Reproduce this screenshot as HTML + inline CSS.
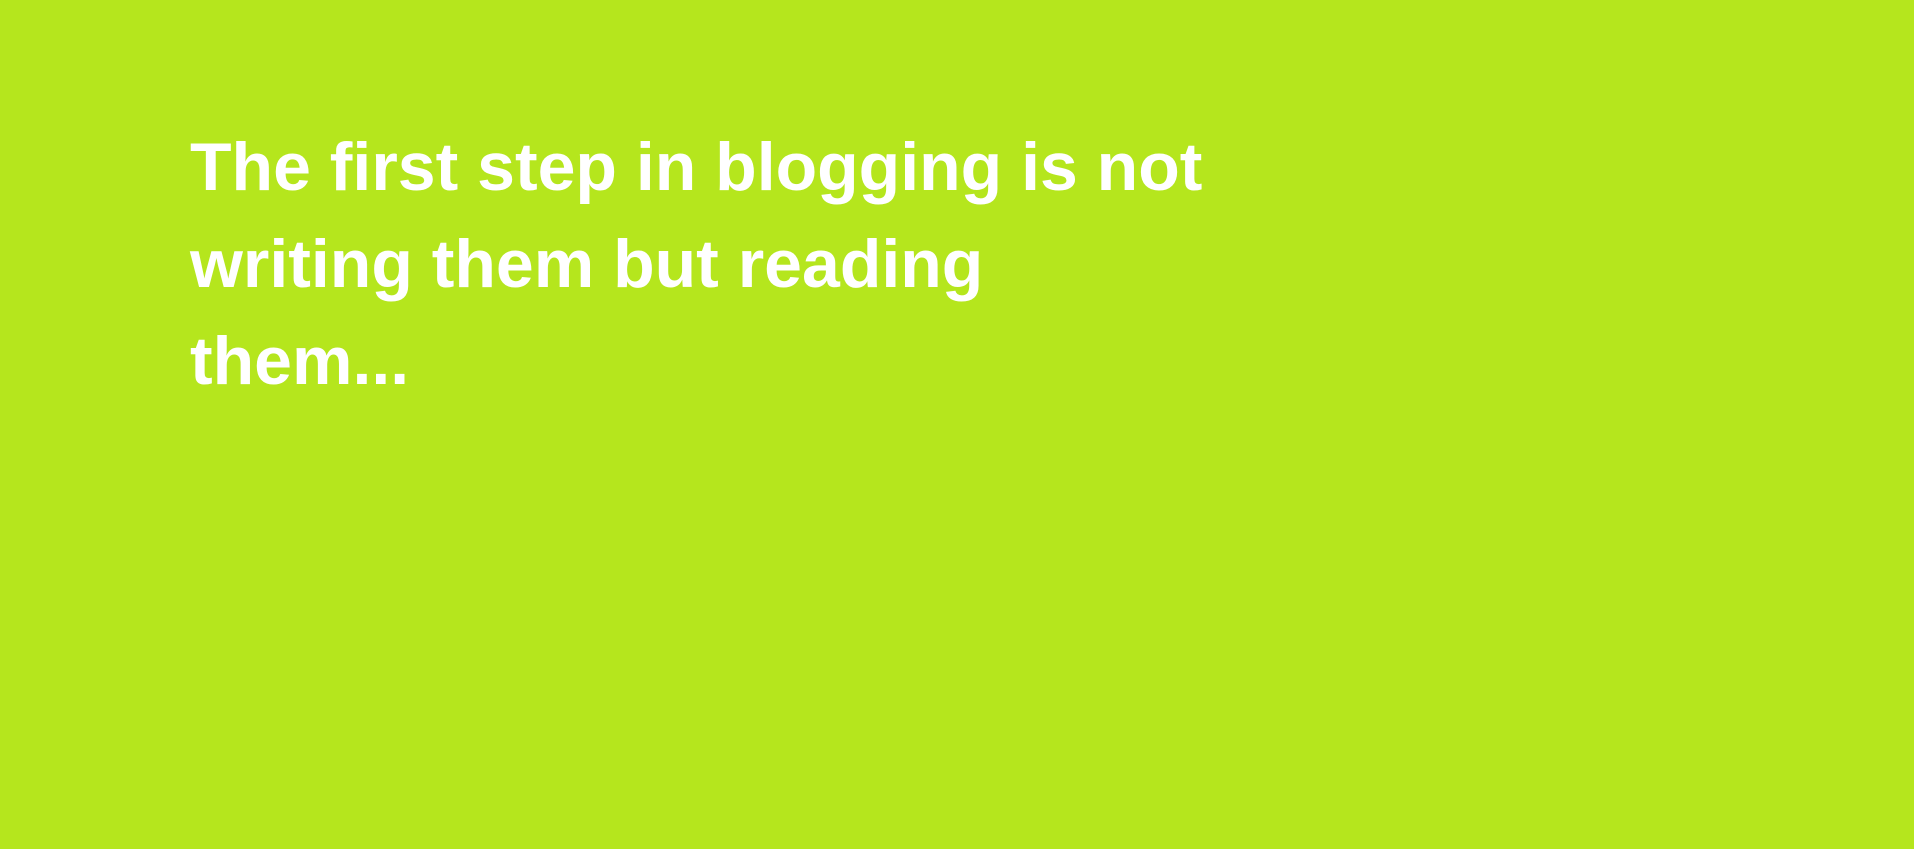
<!DOCTYPE html>
<html><head><meta charset="utf-8"><style>
html,body{margin:0;padding:0;width:1914px;height:849px;overflow:hidden;background:#b5e61d;}
.t{position:absolute;left:190px;top:119px;width:1400px;font-family:"Liberation Sans",sans-serif;font-weight:bold;font-size:68px;line-height:97px;color:#fff;letter-spacing:0px;word-spacing:0px;}
</style></head><body>
<div class="t">The first step in blogging is not<br>writing them but reading<br>them...</div>
</body></html>
